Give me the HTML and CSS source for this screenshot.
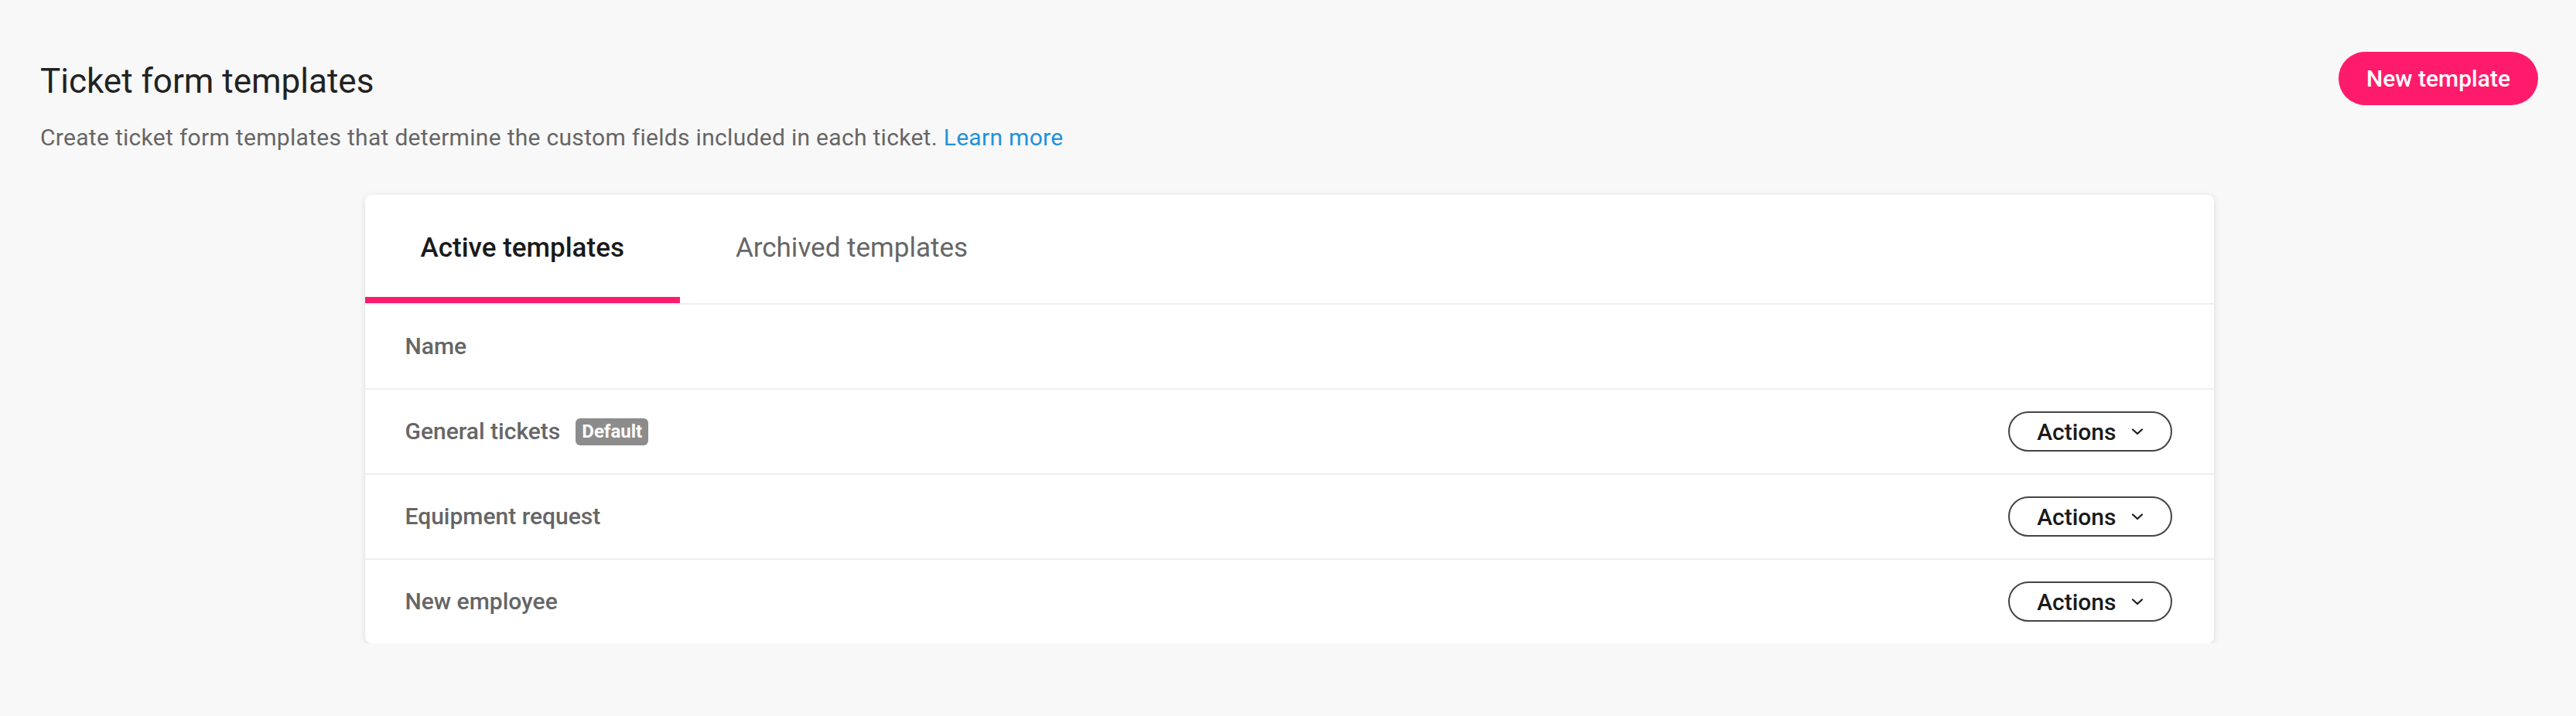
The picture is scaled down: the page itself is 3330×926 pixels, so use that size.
FILE: index.html
```html
<!DOCTYPE html>
<html lang="en">
<head>
    <meta charset="UTF-8">
    <meta name="viewport" content="width=device-width, initial-scale=1.0">
    <title>Ticket form templates</title>
    <link rel="stylesheet" href="styles.css">
</head>
<body>
    <div class="page">
        <div class="page-header">
            <div class="page-intro">
                <h1>Ticket form templates</h1>
                <p class="subtitle">Create ticket form templates that determine the custom fields included in each ticket. <a href="#">Learn more</a></p>
            </div>
            <button class="btn-primary">New template</button>
        </div>

        <div class="card">
            <div class="tabs">
                <div class="tab active">Active templates</div>
                <div class="tab">Archived templates</div>
            </div>

            <div class="table-head">Name</div>

            <div class="row">
                <div class="row-name">General tickets <span class="badge">Default</span></div>
                <button class="btn-actions">Actions
                    <svg width="16" height="10" viewBox="0 0 16 10"><path d="M2 2.5l6 5.5 6-5.5" fill="none" stroke="#1a1a1a" stroke-width="2.2" stroke-linecap="round" stroke-linejoin="round"/></svg>
                </button>
            </div>
            <div class="row">
                <div class="row-name">Equipment request</div>
                <button class="btn-actions">Actions
                    <svg width="16" height="10" viewBox="0 0 16 10"><path d="M2 2.5l6 5.5 6-5.5" fill="none" stroke="#1a1a1a" stroke-width="2.2" stroke-linecap="round" stroke-linejoin="round"/></svg>
                </button>
            </div>
            <div class="row">
                <div class="row-name">New employee</div>
                <button class="btn-actions">Actions
                    <svg width="16" height="10" viewBox="0 0 16 10"><path d="M2 2.5l6 5.5 6-5.5" fill="none" stroke="#1a1a1a" stroke-width="2.2" stroke-linecap="round" stroke-linejoin="round"/></svg>
                </button>
            </div>
        </div>
    </div>
</body>
</html>
```

FILE: styles.css
```css
body {
    font-family: Roboto, "Liberation Sans", Arial, sans-serif;
    margin: 0;
    padding: 0;
    background-color: #f8f8f8;
    color: #1a1a1a;
}
.page {
    padding: 67px 49px 0 52px;
}
.page-header {
    display: flex;
    justify-content: space-between;
    align-items: flex-start;
}
h1 {
    font-size: 44px;
    line-height: 56px;
    font-weight: 400;
    color: #222;
    margin: 10px 0 0 0;
}
.subtitle {
    font-size: 30px;
    line-height: 40px;
    letter-spacing: 0.3px;
    color: #666;
    margin: 25px 0 0 0;
}
.subtitle a {
    color: #2292dc;
    text-decoration: none;
}
.btn-primary {
    background-color: #ff1b6b;
    color: #fff;
    border: none;
    height: 69px;
    padding: 0 36px;
    border-radius: 35px;
    font-family: inherit;
    font-size: 30px;
    font-weight: 500;
    cursor: pointer;
}
.card {
    width: 2390px;
    margin: 54px auto 0 auto;
    background-color: #fff;
    border-radius: 8px;
    box-shadow: 0 2px 8px rgba(0,0,0,0.12);
    overflow: hidden;
}
.tabs {
    display: flex;
    border-bottom: 2px solid #eeeeee;
}
.tab {
    font-size: 35px;
    line-height: 44px;
    padding: 47px 72px 41px 72px;
    border-bottom: 8px solid transparent;
    color: #666;
}
.tab.active {
    color: #1a1a1a;
    font-weight: 500;
    border-bottom-color: #ff1b6b;
}
.table-head {
    font-size: 30px;
    line-height: 36px;
    font-weight: 500;
    color: #666;
    padding: 36px 52px;
    border-bottom: 2px solid #eeeeee;
}
.row {
    display: flex;
    justify-content: space-between;
    align-items: center;
    height: 108px;
    padding: 0 54px 0 52px;
    border-bottom: 2px solid #eeeeee;
}
.row:last-child {
    border-bottom: none;
}
.row-name {
    font-size: 30px;
    line-height: 36px;
    font-weight: 500;
    color: #666;
    display: flex;
    align-items: center;
}
.badge {
    background-color: #8c8c8c;
    color: #fff;
    font-size: 24px;
    line-height: 35px;
    font-weight: 700;
    padding: 0 8px;
    border-radius: 6px;
    margin-left: 20px;
}
.btn-actions {
    display: inline-flex;
    align-items: center;
    gap: 19px;
    height: 52px;
    padding: 0 35px;
    background-color: #fff;
    border: 2px solid #444;
    border-radius: 26px;
    font-family: inherit;
    font-size: 30px;
    font-weight: 500;
    color: #1a1a1a;
    cursor: pointer;
}
```
